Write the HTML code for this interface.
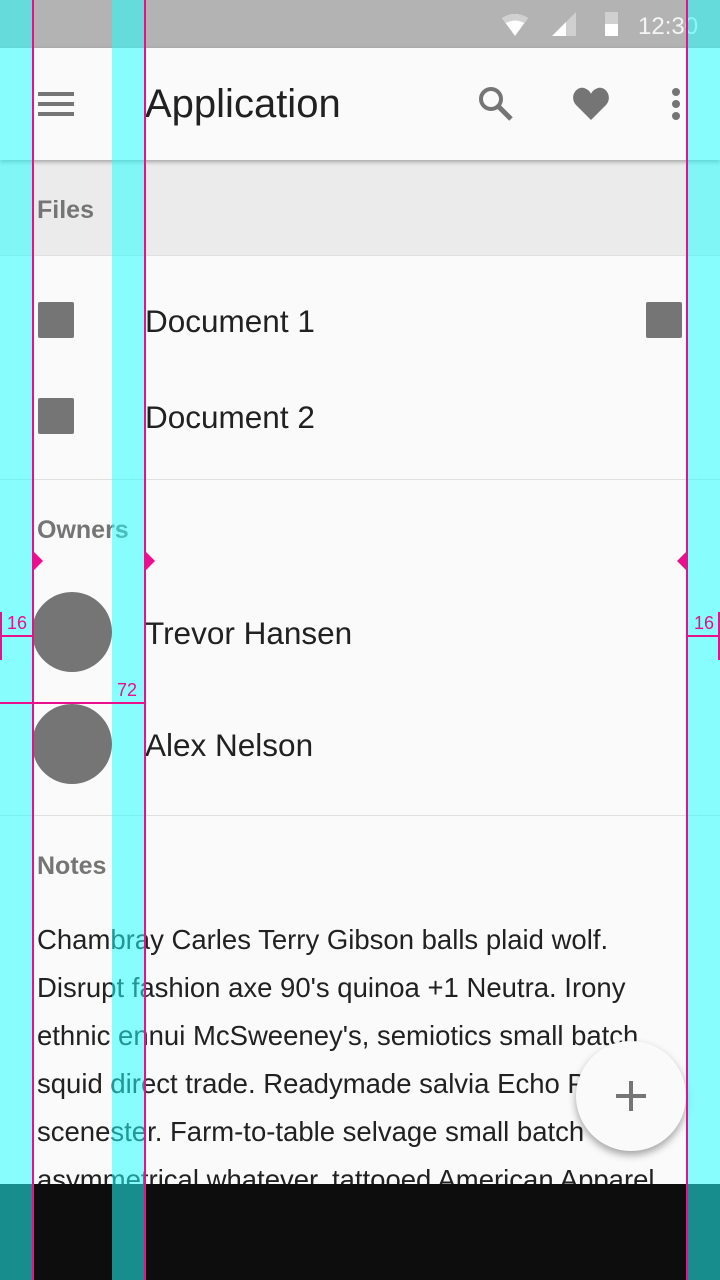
<!DOCTYPE html>
<html><head><meta charset="utf-8"><style>
*{margin:0;padding:0;box-sizing:border-box}
body{width:720px;height:1280px;position:relative;overflow:hidden;background:#fafafa;font-family:"Liberation Sans",sans-serif;color:#212121}
.abs{position:absolute}
.status{left:0;top:0;width:720px;height:48px;background:#b3b3b3}
.appbar{left:0;top:48px;width:720px;height:112px;background:#fafafa;box-shadow:0 2px 4px rgba(0,0,0,.3);z-index:2}
.sub{left:0;top:160px;width:720px;height:96px;background:#ebebeb}
.hdr{font-size:25px;font-weight:bold;color:#757575;left:37px}
.item{font-size:31.5px;left:145px;line-height:36px}
.div{left:0;width:720px;height:1px;background:#e0e0e0}
.sq{width:36px;height:36px;background:#757575;border-radius:2px}
.av{width:80px;height:80px;border-radius:50%;background:#757575;left:32px}
.note{left:37px;font-size:27.5px;white-space:nowrap;line-height:48px}
.nav{left:0;top:1184px;width:720px;height:96px;background:#0d0d0d;z-index:5}
.cy{top:0;height:1280px;width:32px;background:rgba(34,255,255,.53);z-index:10}
.mg{top:0;height:1280px;width:2px;background:#e8108c;z-index:11}
</style></head><body>
<div class="abs status"></div>
<svg class="abs" style="left:500px;top:12px;z-index:3" width="210" height="26">
<path d="M2 6 Q15 -2 28 6 L15 24 Z" fill="#fff"/>
<path d="M2 6 Q15 -2 28 6 L24 11 Q15 6 6 11Z" fill="#d0d0d0"/>
<path d="M52 24 L76 0 L76 24Z" fill="#d0d0d0"/><path d="M52 24 L66 10 L66 24Z" fill="#fff"/>
<rect x="105" y="0" width="13" height="24" fill="#d0d0d0"/><rect x="105" y="12" width="13" height="12" fill="#fff"/><rect x="108" y="-2" width="7" height="3" fill="#d0d0d0"/>
<text x="138" y="22" font-family="Liberation Sans" font-size="24" fill="#f5f5f5">12:30</text>
</svg>
<div class="abs appbar">
<div class="abs" style="left:38px;top:44px;width:36px;height:4px;background:#757575;box-shadow:0 10px 0 #757575,0 20px 0 #757575"></div>
<div class="abs" style="left:145px;top:33px;font-size:40px;line-height:46px;color:#212121">Application</div>
<svg class="abs" style="left:476px;top:36px" width="40" height="40"><circle cx="15" cy="15" r="10" stroke="#757575" stroke-width="4" fill="none"/><path d="M22 22 L35 35" stroke="#757575" stroke-width="5"/></svg>
<svg class="abs" style="left:572px;top:38px" width="40" height="36"><path d="M19 34 L4 19 C-3 11 4 0 12 2 C15 3 18 5 19 8 C20 5 23 3 26 2 C34 0 41 11 34 19Z" fill="#757575"/></svg>
<div class="abs" style="left:672px;top:40px;width:8px;height:8px;border-radius:50%;background:#757575;box-shadow:0 12px 0 #757575,0 24px 0 #757575"></div>
</div>
<div class="abs sub"></div>
<div class="abs hdr" style="top:196px">Files</div>
<div class="abs div" style="top:255px"></div>
<div class="abs sq" style="left:38px;top:302px"></div>
<div class="abs sq" style="left:646px;top:302px"></div>
<div class="abs item" style="top:303px">Document 1</div>
<div class="abs sq" style="left:38px;top:398px"></div>
<div class="abs item" style="top:399px">Document 2</div>
<div class="abs div" style="top:479px"></div>
<div class="abs hdr" style="top:516px">Owners</div>
<div class="abs av" style="top:592px"></div>
<div class="abs item" style="top:615px">Trevor Hansen</div>
<div class="abs av" style="top:704px"></div>
<div class="abs item" style="top:727px">Alex Nelson</div>
<div class="abs div" style="top:815px"></div>
<div class="abs hdr" style="top:852px">Notes</div>
<div class="abs note" style="top:916px">Chambray Carles Terry Gibson balls plaid wolf.<br>Disrupt fashion axe 90's quinoa +1 Neutra. Irony<br>ethnic ennui McSweeney's, semiotics small batch<br>squid direct trade. Readymade salvia Echo Park<br>scenester. Farm-to-table selvage small batch<br>asymmetrical whatever, tattooed American Apparel</div>
<div class="abs" style="left:576px;top:1041px;width:110px;height:110px;border-radius:50%;background:#fafafa;box-shadow:0 4px 8px rgba(0,0,0,.35);z-index:4">
<div class="abs" style="left:40px;top:53px;width:30px;height:4px;background:#757575"></div>
<div class="abs" style="left:53px;top:40px;width:4px;height:30px;background:#757575"></div></div>
<div class="abs nav"></div>
<div class="abs cy" style="left:0"></div>
<div class="abs cy" style="left:112px"></div>
<div class="abs cy" style="left:688px"></div>
<div class="abs mg" style="left:32px"></div>
<div class="abs mg" style="left:144px"></div>
<div class="abs mg" style="left:686px"></div>
<svg class="abs" style="left:0;top:0;z-index:12" width="720" height="1280">
<path d="M34 552 L43 561 L34 570Z M146 552 L155 561 L146 570Z M686 552 L677 561 L686 570Z" fill="#e8108c"/>
<path d="M1 612 V660 M0 636 H32 M719 612 V660 M688 636 H720 M0 703 H145" stroke="#e8108c" stroke-width="2"/>
<text x="7" y="629" font-size="18" fill="#e8108c" font-family="Liberation Sans">16</text>
<text x="694" y="629" font-size="18" fill="#e8108c" font-family="Liberation Sans">16</text>
<text x="117" y="696" font-size="18" fill="#e8108c" font-family="Liberation Sans">72</text>
</svg>
</body></html>
